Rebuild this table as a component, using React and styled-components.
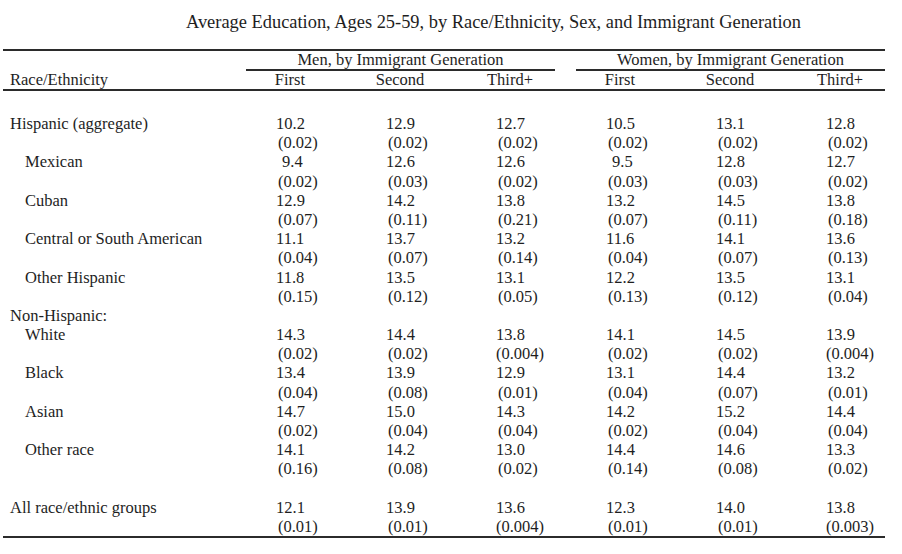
import styled, { createGlobalStyle } from "styled-components";

const GlobalStyle = createGlobalStyle`
  body {
    margin: 0;
    background: #fff;
    color: #1e1e1e;
    font-family: "Liberation Serif", "Times New Roman", serif;
  }
`;

const Page = styled.div`
  padding: 11px 0 0 3px;
  width: 902px;
  height: 554px;
  box-sizing: border-box;
  overflow: hidden;
`;

const Title = styled.h1`
  margin: 0 0 16px 183px;
  font-size: 18.4px;
  line-height: 22px;
  font-weight: normal;
  white-space: nowrap;
`;

const Table = styled.div`
  width: 882px;
  border-top: 2px solid #2b2b2b;
  border-bottom: 2px solid #2b2b2b;
  font-size: 16.5px;
`;

const Row = styled.div`
  display: grid;
  grid-template-columns: 232px repeat(6, 110px);
  line-height: ${(p) => (p.$tight ? "18px" : "19.18px")};
  ${(p) => p.$ruled && "border-bottom: 2px solid #2b2b2b;"}
`;

const Group = styled.div`
  grid-column: span 3;
  margin: 0 10px 0 11px;
  text-align: center;
  border-bottom: 2px solid #2b2b2b;
  white-space: nowrap;
`;

const Head = styled.div`
  text-align: center;
`;

const Label = styled.div`
  padding-left: ${(p) => (p.$indent ? "22px" : "7px")};
  white-space: nowrap;
`;

const Body = styled.div`
  padding-top: 23px;
`;

const Cell = styled.div`
  padding-left: 41px;
  white-space: nowrap;
`;

const Val = styled.div`
  padding-left: ${(p) => (p.$short ? "6px" : "0")};
`;

const Se = styled.div`
  padding-left: ${(p) => (p.$wide ? "0" : "2px")};
`;

const Blank = styled.div`
  height: 19.18px;
`;

const data = [
  { label: "Hispanic (aggregate)", v: [["10.2", "(0.02)"], ["12.9", "(0.02)"], ["12.7", "(0.02)"], ["10.5", "(0.02)"], ["13.1", "(0.02)"], ["12.8", "(0.02)"]] },
  { label: "Mexican", indent: true, v: [["9.4", "(0.02)"], ["12.6", "(0.03)"], ["12.6", "(0.02)"], ["9.5", "(0.03)"], ["12.8", "(0.03)"], ["12.7", "(0.02)"]] },
  { label: "Cuban", indent: true, v: [["12.9", "(0.07)"], ["14.2", "(0.11)"], ["13.8", "(0.21)"], ["13.2", "(0.07)"], ["14.5", "(0.11)"], ["13.8", "(0.18)"]] },
  { label: "Central or South American", indent: true, v: [["11.1", "(0.04)"], ["13.7", "(0.07)"], ["13.2", "(0.14)"], ["11.6", "(0.04)"], ["14.1", "(0.07)"], ["13.6", "(0.13)"]] },
  { label: "Other Hispanic", indent: true, v: [["11.8", "(0.15)"], ["13.5", "(0.12)"], ["13.1", "(0.05)"], ["12.2", "(0.13)"], ["13.5", "(0.12)"], ["13.1", "(0.04)"]] },
  { label: "Non-Hispanic:" },
  { label: "White", indent: true, v: [["14.3", "(0.02)"], ["14.4", "(0.02)"], ["13.8", "(0.004)"], ["14.1", "(0.02)"], ["14.5", "(0.02)"], ["13.9", "(0.004)"]] },
  { label: "Black", indent: true, v: [["13.4", "(0.04)"], ["13.9", "(0.08)"], ["12.9", "(0.01)"], ["13.1", "(0.04)"], ["14.4", "(0.07)"], ["13.2", "(0.01)"]] },
  { label: "Asian", indent: true, v: [["14.7", "(0.02)"], ["15.0", "(0.04)"], ["14.3", "(0.04)"], ["14.2", "(0.02)"], ["15.2", "(0.04)"], ["14.4", "(0.04)"]] },
  { label: "Other race", indent: true, v: [["14.1", "(0.16)"], ["14.2", "(0.08)"], ["13.0", "(0.02)"], ["14.4", "(0.14)"], ["14.6", "(0.08)"], ["13.3", "(0.02)"]] },
  { blank: true },
  { label: "All race/ethnic groups", v: [["12.1", "(0.01)"], ["13.9", "(0.01)"], ["13.6", "(0.004)"], ["12.3", "(0.01)"], ["14.0", "(0.01)"], ["13.8", "(0.003)"]] },
];

const gens = ["First", "Second", "Third+"];

export default function App() {
  return (
    <Page>
      <GlobalStyle />
      <Title>
        Average Education, Ages 25-59, by Race/Ethnicity, Sex, and Immigrant
        Generation
      </Title>
      <Table>
        <Row $tight>
          <div />
          <Group>Men, by Immigrant Generation</Group>
          <Group>Women, by Immigrant Generation</Group>
        </Row>
        <Row $tight $ruled>
          <Label>Race/Ethnicity</Label>
          {[...gens, ...gens].map((g, i) => (
            <Head key={i}>{g}</Head>
          ))}
        </Row>
        <Body>
          {data.map((r, i) =>
            r.blank ? (
              <Blank key={i} />
            ) : (
              <Row key={i}>
                <Label $indent={r.indent}>{r.label}</Label>
                {r.v &&
                  r.v.map(([val, se], j) => (
                    <Cell key={j}>
                      <Val $short={val.length < 4}>{val}</Val>
                      <Se $wide={se.length > 6}>{se}</Se>
                    </Cell>
                  ))}
              </Row>
            )
          )}
        </Body>
      </Table>
    </Page>
  );
}
